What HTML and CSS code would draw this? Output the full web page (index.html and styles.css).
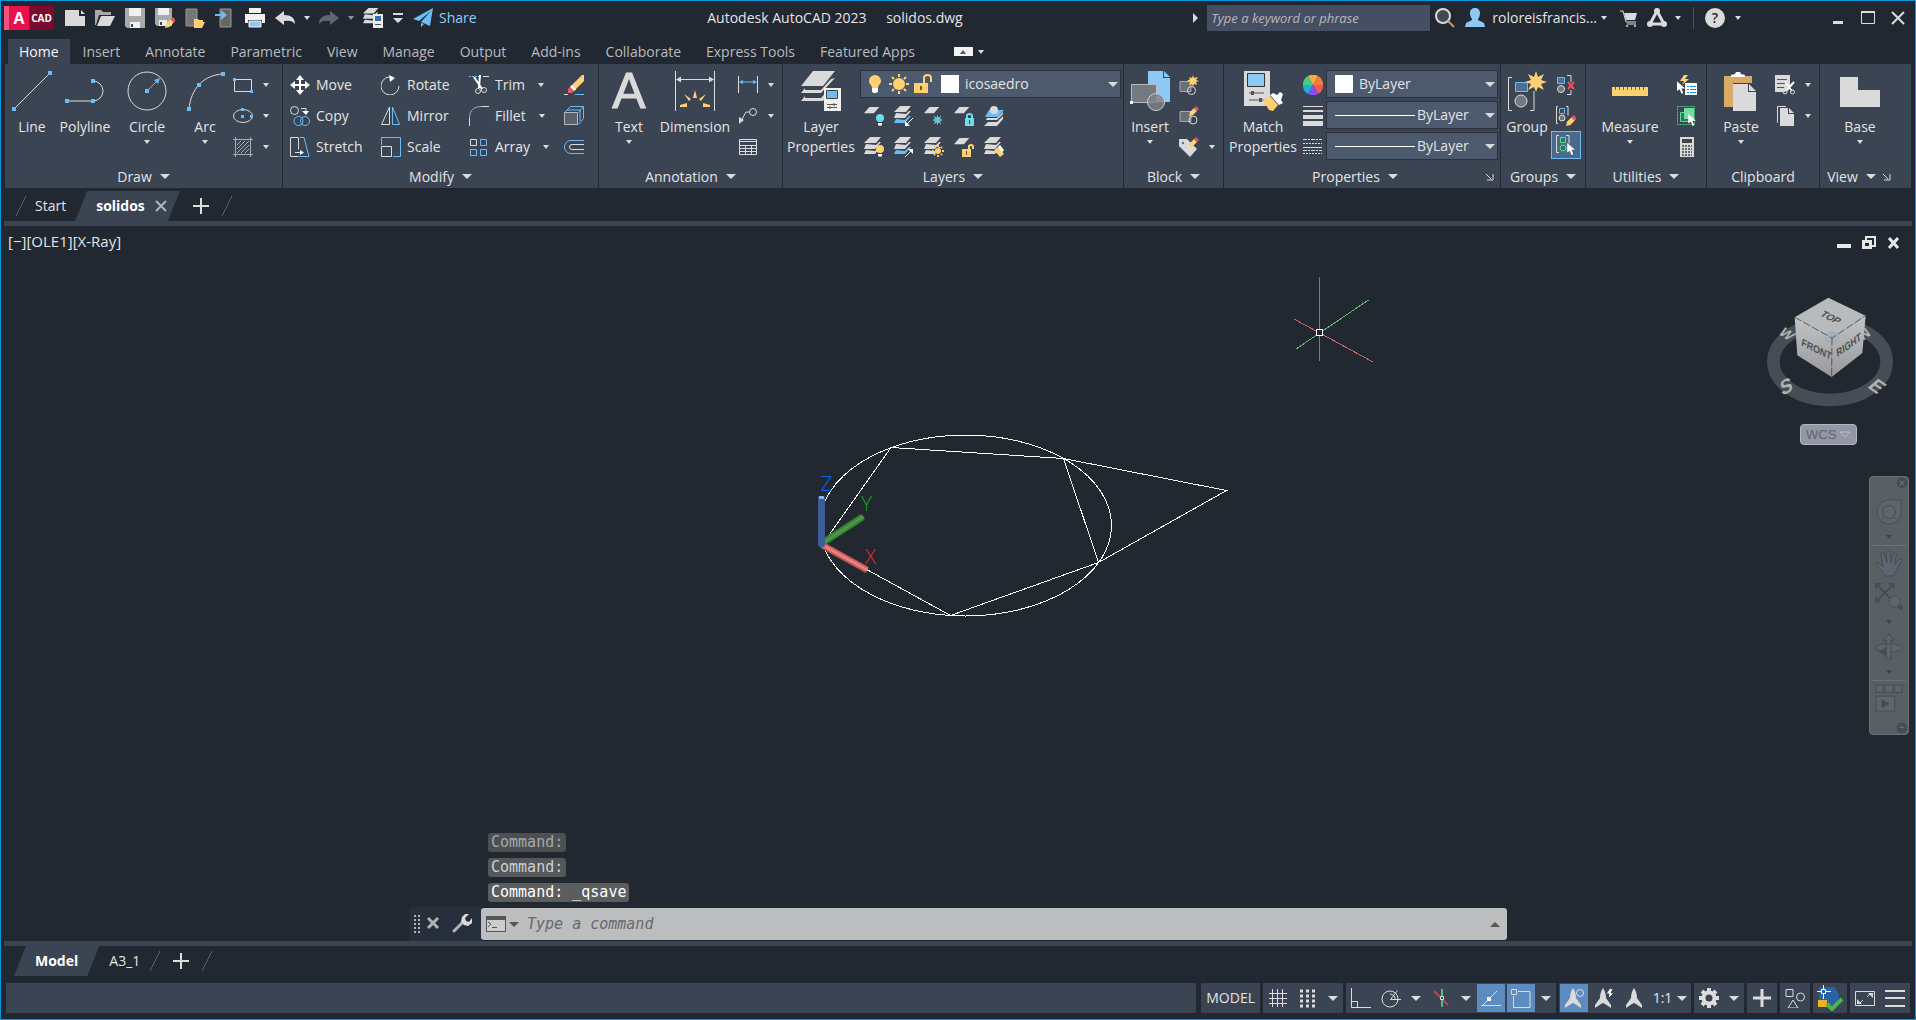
FILE: index.html
```html
<!DOCTYPE html>
<html lang="en">
<head>
	<meta charset="utf-8">
	<title>Autodesk AutoCAD 2023 - solidos.dwg</title>
	<link rel="stylesheet" href="styles.css">
</head>
<body>
<!-- shared icon parts -->
<svg class="defs" width="0" height="0">
	<symbol id="sheet" viewBox="0 0 20 20"><path class="fw" d="M6 1h11l-6 7H0z"/></symbol>
	<symbol id="stack" viewBox="0 0 20 20">
		<path class="fw" d="M6 0h11l-5 6H0z"/>
		<path class="fw" d="M2 7l-2 5h11l6-7h-2l-3 3z"/>
		<path class="fw" d="M2 13l-2 4h11l6-7h-2l-4 4z"/>
	</symbol>
	<symbol id="stack-blue" viewBox="0 0 20 20">
		<path class="fw" d="M6 0h11l-5 6H0z"/>
		<path class="fw" d="M2 7l-2 5h11l6-7h-2l-3 3z"/>
		<path class="fb" d="M2 13l-2 4h11l6-7h-2l-4 4z"/>
	</symbol>
	<symbol id="pencil" viewBox="0 0 10 10">
		<path class="fy" d="M1 6l4-4 3 3-4 4-4 1z"/><path fill="#e8545c" d="M5 2l2-2 3 3-2 2z"/>
	</symbol>
	<symbol id="cursor" viewBox="0 0 10 14"><path fill="#fff" d="M0 0v11l3-2 2 5 2-1-2-5h4z"/></symbol>
	<symbol id="north" viewBox="0 0 20 20"><path class="fw" d="M10 0c2 3 3 6 3 10l5 7v3l-6-4-2-1-2 1-6 4v-3l5-7c0-4 1-7 3-10z"/></symbol>
</svg>

<header class="titlebar">
	<button class="logo" aria-label="Application menu"><b>A</b><span>CAD</span></button>
	<div class="quick">
		<button aria-label="New"><svg viewBox="0 0 20 20"><path class="fw" d="M0 2h14v6h6v10H0zM16 2l4 4h-4z"/></svg></button>
		<button aria-label="Open"><svg viewBox="0 0 20 20"><path fill="#a9a9a9" d="M0 2h6l2 2h8v3H4L1 17H0z"/><path class="fw" d="M6 8h14l-5 10H2z"/></svg></button>
		<button aria-label="Save"><svg viewBox="0 0 20 20"><path fill="#a9a9a9" d="M0 0h20v20H2l-2-2z"/><path fill="#f0f0f0" d="M4 0h12v8H4zM5 14h10v6H5z"/><path fill="#444" d="M6 16h2v3H6z"/></svg></button>
		<button aria-label="Save As"><svg viewBox="0 0 20 20"><path fill="#a9a9a9" d="M0 0h17v18H2l-2-2z"/><path fill="#f0f0f0" d="M3 0h11v7H3zM4 12h8v6H4z"/><path fill="#444" d="M5 14h2v3H5z"/><use href="#pencil" x="10" y="9" width="11" height="11"/></svg></button>
		<button aria-label="Open from mobile"><svg viewBox="0 0 20 20"><path fill="#777" stroke="#999" d="M1 1h11v17H1z"/><path class="fy" d="M9 11h4l1 1h4v2h2l-3 6H9z"/></svg></button>
		<button aria-label="Save to mobile"><svg viewBox="0 0 20 20"><path fill="#666" stroke="#999" d="M5 1h11v18H5z"/><path class="fb" d="M0 6h6V2l6 5-6 5V8H0z"/></svg></button>
		<button aria-label="Plot"><svg viewBox="0 0 20 20"><path fill="#f0f0f0" d="M4 0h12v5H4zM0 6h20v9h-3v-3H3v3H0z"/><path fill="#8ec8f5" stroke="#f0f0f0" d="M4 13h12v6H4z"/></svg></button>
		<button aria-label="Undo"><svg viewBox="0 0 20 20"><path class="fw" d="M0 10l9-7v4c7 0 11 3 11 9-2-3-6-4-11-3v4z"/></svg></button>
		<button class="drop" aria-label="Undo list"></button>
		<button class="dim" aria-label="Redo"><svg viewBox="0 0 20 20"><path class="fw" d="M20 10l-9-7v4C4 7 0 10 0 16c2-3 6-4 11-3v4z"/></svg></button>
		<button class="drop dim2" aria-label="Redo list"></button>
		<button aria-label="Layer properties"><svg viewBox="0 0 20 20"><use href="#stack" width="18" height="18"/><path fill="#eee" d="M10 6h10v14H10z"/><path fill="#3b6ea5" d="M12 8h6v5h-6z"/><path stroke="#555" d="M12 16.500h6"/></svg></button>
		<button class="custom" aria-label="Customize"><svg viewBox="0 0 10 20"><path class="fw" d="M0 5h10v2H0zM0 10h10l-5 5z"/></svg></button>
		<button class="share"><svg viewBox="0 0 20 20"><path class="fb" d="M20 0L0 11l6 2L18 3 8 14l9 4zM8 15v4l3-3z"/></svg>Share</button>
	</div>
	<h1>Autodesk AutoCAD 2023 <span>solidos.dwg</span></h1>
	<div class="info">
		<i class="right-arrow"></i>
		<input class="search" type="text" placeholder="Type a keyword or phrase" aria-label="Search">
		<button class="find" aria-label="Find"><svg viewBox="0 0 20 20"><circle cx="8" cy="8" r="7" fill="#444a52" stroke-width="2"/><path stroke="#c89a62" stroke-width="2" d="M13 13l6 6"/></svg></button>
		<button class="user"><svg viewBox="0 0 20 20"><path fill="#8ec8f5" d="M10 0c3 0 5 2 5 5 0 2-1 5-2 6v1l6 3 1 4H0l1-4 6-3v-1C6 10 5 7 5 5c0-3 2-5 5-5z"/></svg>roloreisfrancis...</button>
		<button class="drop" aria-label="Account menu"></button>
		<button aria-label="Store"><svg viewBox="0 0 20 20"><path d="M1 3h3l3 11h10M8 16h9"/><path class="fw" d="M5 5h13l-2 7H7z"/><circle class="fw" cx="8" cy="18" r="1"/><circle class="fw" cx="16" cy="18" r="1"/></svg></button>
		<button aria-label="Apps"><svg viewBox="0 0 20 20"><path stroke-width="3" d="M10 3L3 16h14z"/><circle class="fw" cx="10" cy="3" r="3"/><circle class="fw" cx="3" cy="16" r="3"/><circle class="fw" cx="17" cy="16" r="3"/></svg></button>
		<button class="drop" aria-label="Apps menu"></button>
		<i class="divider"></i>
		<button class="help" aria-label="Help">?</button>
		<button class="drop" aria-label="Help menu"></button>
	</div>
	<div class="window">
		<button aria-label="Minimize"><svg viewBox="0 0 16 16"><path stroke-width="3" d="M3 12.500h10"/></svg></button>
		<button aria-label="Maximize"><svg viewBox="0 0 16 16"><path d="M1.500 1.500h13v12h-13z"/><path stroke-width="2" d="M1 2h14"/></svg></button>
		<button aria-label="Close"><svg viewBox="0 0 16 16"><path stroke-width="2" d="M2 2l12 12M14 2L2 14"/></svg></button>
	</div>
</header>

<nav class="ribbon-tabs">
	<button class="active">Home</button>
	<button>Insert</button>
	<button>Annotate</button>
	<button>Parametric</button>
	<button>View</button>
	<button>Manage</button>
	<button>Output</button>
	<button>Add-ins</button>
	<button>Collaborate</button>
	<button>Express Tools</button>
	<button>Featured Apps</button>
	<button class="minimize" aria-label="Minimize ribbon"><i></i></button>
	<button class="drop" aria-label="Ribbon options"></button>
</nav>

<main class="ribbon">
	<section class="panel draw">
		<div class="tools">
			<button class="big line"><svg viewBox="0 0 40 40"><path d="M2 38L38 2"/><path class="fb" d="M0 36h4v4H0zM36 0h4v4h-4z"/></svg>Line</button>
			<button class="big pline"><svg viewBox="0 0 40 40"><path d="M2 30h26a9 9 0 0 0 0-20"/><path class="fb" d="M0 28h4v4H0zM26 28h4v4h-4zM26 8h4v4h-4z"/></svg>Polyline</button>
			<button class="big circle"><svg viewBox="0 0 40 40"><circle cx="20" cy="20" r="19"/><path class="b" d="M20 20l9-9"/><path class="fb" d="M18 18h4v4h-4zM33 7l-2 6-4-4z"/></svg>Circle<i class="caret"></i></button>
			<button class="big arc"><svg viewBox="0 0 40 40"><path d="M4 38C6 18 18 4 38 3"/><path class="fb" d="M2 36h4v4H2zM36 1h4v4h-4zM12 12h4v4h-4z"/></svg>Arc<i class="caret"></i></button>
			<div class="minis">
				<button class="mini"><svg viewBox="0 0 20 20"><path d="M1.500 4.500h17v12h-17z"/><path class="fb" d="M0 3h3v3H0zM17 15h3v3h-3z"/></svg><i class="caret"></i></button>
				<button class="mini"><svg viewBox="0 0 20 20"><ellipse cx="10" cy="10" rx="9.500" ry="6.500"/><path class="fb" d="M8 2h3v3H8zM8 9h3v3H8zM17 9h3v3h-3z"/></svg><i class="caret"></i></button>
				<button class="mini"><svg viewBox="0 0 20 20"><path class="b" d="M4 8l4-4M4 12l8-8M4 16L16 4M8 16l8-8M12 16l4-4"/><path stroke="#a9acb2" d="M2.500 0v20M17.500 0v20M0 2.500h20M0 17.500h20"/></svg><i class="caret"></i></button>
			</div>
		</div>
		<h2><span>Draw <i class="caret"></i></span></h2>
	</section>

	<section class="panel modify">
		<div class="tools">
			<div class="grid">
				<button class="mini"><svg viewBox="0 0 20 20"><path stroke="#fff" stroke-width="2" d="M10 2v16M2 10h16"/><path fill="#fff" d="M10 0l4 5H6zM10 20l4-5H6zM0 10l5-4v8zM20 10l-5-4v8z"/></svg>Move</button>
				<button class="mini"><svg viewBox="0 0 20 20"><path d="M8 2a9 9 0 1 0 10 9"/><path fill="#fff" d="M8 0l6 3-5 4z"/></svg>Rotate</button>
				<button class="mini"><svg viewBox="0 0 20 20"><path class="b" stroke-dasharray="2 1" d="M0 1.500h10"/><path d="M14 1.500h6"/><path stroke="#fff" stroke-width="2" d="M5 2l8 12M11 0l-1 13"/><circle cx="9" cy="16" r="2.500"/><circle cx="15" cy="15" r="2.500"/></svg>Trim<i class="caret"></i></button>
				<button class="mini"><svg viewBox="0 0 20 20"><path class="fy" d="M20 0v6L10 16l-4-4L18 0z"/><path fill="#fff" d="M8 10l4 4-2 2-4-4z"/><path fill="#ee5560" d="M6 12l4 4-2 2H4v-4z"/><path d="M0 19.500h4"/><path class="b" d="M11 19.500h9"/></svg></button>
				<button class="mini"><svg viewBox="0 0 20 20"><circle cx="4.500" cy="4.500" r="4"/><path d="M11 2.500h5V7"/><path fill="#fff" d="M12 5h7l-3 4z"/><g class="b"><circle cx="8.500" cy="15" r="4.500"/><circle cx="15" cy="15" r="4.500"/></g></svg>Copy</button>
				<button class="mini"><svg viewBox="0 0 20 20"><path d="M8.500 1v17.500H.500z"/><path class="b" d="M11.500 1v17.500h7z"/></svg>Mirror</button>
				<button class="mini"><svg viewBox="0 0 20 20"><path class="b" d="M.500 12C.500 4 5 .500 13 .500"/><path d="M13 .500h7M.500 12v8"/></svg>Fillet<i class="caret"></i></button>
				<button class="mini"><svg viewBox="0 0 20 20"><g class="b"><path d="M.500 6.500l6-6h13l-5 6M19.500.500v12l-5 6M3 4h13v11"/></g><path d="M.500 6.500h13v12H.500z" stroke="#b4b7bb" fill="#5a616d"/></svg></button>
				<button class="mini"><svg viewBox="0 0 20 20"><path d="M8.500 19.500h-8V.500h8v12M5 15.500h7"/><path class="b" d="M10 .500h4l5 19H9"/><path fill="#fff" d="M10 13l4 2.500-4 2.500z"/></svg>Stretch</button>
				<button class="mini"><svg viewBox="0 0 20 20"><path class="b" d="M.500 8V.500h19v19H12"/><path d="M.500 9.500h10v10H.500z"/></svg>Scale</button>
				<button class="mini"><svg viewBox="0 0 20 20"><path d="M1.500 2.500h6v6h-6z"/><path class="b" d="M11.500 2.500h6v6h-6zM1.500 12.500h6v6h-6zM11.500 12.500h6v6h-6z"/></svg>Array<i class="caret"></i></button>
				<button class="mini"><svg viewBox="0 0 20 20"><path class="b" d="M20 3.500H7a6.500 6.500 0 0 0 0 13h13"/><path d="M20 7.500H8a2.500 2.500 0 0 0 0 5h12"/></svg></button>
			</div>
		</div>
		<h2><span>Modify <i class="caret"></i></span></h2>
	</section>

	<section class="panel annotation">
		<div class="tools">
			<button class="big text"><b class="glyph">A</b>Text<i class="caret"></i></button>
			<button class="big dimension"><svg viewBox="0 0 40 40"><path d="M.500 0v40M39.500 0v40M2 8.500h36"/><path class="fw" d="M1 8.500l5-3v6zM39 8.500l-5-3v6z"/><path class="fy" d="M18 27l2-8 2 8zM14 30l-5-7 7 5zM26 30l5-7-7 5zM12 32v4H5v-2zM28 32v4h7v-2z"/></svg>Dimension</button>
			<div class="minis">
				<button class="mini"><svg viewBox="0 0 20 20"><path d="M.500 1v17M19.500 1v17"/><path class="b" d="M2 7h16"/><path class="fb" d="M1 7l4-2v4zM19 7l-4-2v4z"/></svg><i class="caret"></i></button>
				<button class="mini"><svg viewBox="0 0 20 20"><circle cx="15" cy="6" r="3.500"/><path d="M11 6H8L3 15"/><path class="fw" d="M1 18V11l5 3z"/></svg><i class="caret"></i></button>
				<button class="mini"><svg viewBox="0 0 20 20"><path d="M1.500 2.500h17v15h-17zM1 4.500h18M1 8.500h18M1 11.500h18M1 14.500h18M7.500 8v10M13.500 8v10"/></svg></button>
			</div>
		</div>
		<h2><span>Annotation <i class="caret"></i></span></h2>
	</section>

	<section class="panel layers">
		<div class="tools">
			<button class="big"><svg viewBox="0 0 40 40"><path class="fw" d="M12 0h22L22 15H0zM4 17l-4 5h20l14-15-4 1-10 11H4zM4 25l-4 5h22l10-12h-4l-8 9H4z"/><path fill="#f0f0f0" d="M23 17h17v23H23z"/><path fill="#6cbcf5" stroke="#444" d="M25.500 19.500h11v8h-11z"/><path stroke="#555" d="M26 33.500h10M26 36.500h10M33 32v3M29 35v3"/></svg>Layer<br>Properties</button>
			<div class="stackcol">
				<label class="combo">
					<svg viewBox="0 0 20 20"><path class="fy" d="M10 1a6 6 0 0 1 6 6c0 3-3 4-3 7H7c0-3-3-4-3-7a6 6 0 0 1 6-6z"/><path fill="#fff" d="M7 14h6v4l-2 1H9l-2-1z"/></svg>
					<svg viewBox="0 0 20 20"><circle class="fy" cx="10" cy="10" r="6"/><path stroke="#ffd072" stroke-width="2" d="M10 0v3M10 17v3M0 10h3M17 10h3M3 3l2 2M15 15l2 2M17 3l-2 2M5 15l-2 2"/></svg>
					<svg viewBox="0 0 20 20"><path class="fy" d="M1 9h14v10H1z"/><path stroke="#ffd072" stroke-width="2" d="M11 9V4q0-3 3.500-3T18 4v4"/><path stroke="#6d5a30" stroke-width="2" d="M8 12v4"/></svg>
					<i class="swatch"></i>
					<select aria-label="Layer"><option>icosaedro</option></select>
				</label>
				<div class="iconrow">
					<button class="mini"><svg viewBox="0 0 20 20"><use href="#sheet" width="18" height="18"/><circle class="fc" cx="16" cy="12" r="4"/><path fill="#fff" d="M14 17h4v2l-2 1-2-1z"/></svg></button>
					<button class="mini"><svg viewBox="0 0 20 20"><use href="#stack-blue" width="20" height="20"/><path stroke="#fff" d="M19 12l-6 6"/><path fill="#fff" d="M11 20v-5l5 5z"/></svg></button>
					<button class="mini"><svg viewBox="0 0 20 20"><use href="#sheet" width="18" height="18"/><path stroke="#6fdce8" d="M9 14h9M13.500 9.500v9M10 10l7 8M17 10l-7 8M11 12h5v4h-5z"/></svg></button>
					<button class="mini"><svg viewBox="0 0 20 20"><use href="#sheet" width="18" height="18"/><path class="fc" d="M11 12h9v8h-9z"/><path stroke="#6fdce8" stroke-width="2" d="M13 12V9q2.500-2 5 0v3"/><path stroke="#256" d="M15.500 14v4"/></svg></button>
					<button class="mini"><svg viewBox="0 0 20 20"><path class="fw" d="M4 16h9l6-6v3l-6 7H0zM3 12h10l6-6v2l-6 6H2z"/><path class="fb" d="M5 4h15l-6 7H1z"/><circle class="fw" cx="10" cy="4" r="4"/></svg></button>
				</div>
				<div class="iconrow">
					<button class="mini"><svg viewBox="0 0 20 20"><use href="#stack" width="20" height="20"/><circle class="fy" cx="16" cy="12" r="4"/><path fill="#fff" d="M14 17h4v2l-2 1-2-1z"/></svg></button>
					<button class="mini"><svg viewBox="0 0 20 20"><use href="#stack-blue" width="20" height="20"/><path stroke="#fff" d="M11 20l6-6"/><path fill="#fff" d="M19 12v5l-5-5z"/></svg></button>
					<button class="mini"><svg viewBox="0 0 20 20"><use href="#stack" width="20" height="20"/><circle class="fy" cx="14" cy="14" r="3"/><path stroke="#ffd072" stroke-width="2" d="M14 8v2M14 18v2M8 14h2M18 14h2M10 10l1 1M17 17l1 1M18 10l-1 1M11 17l-1 1"/></svg></button>
					<button class="mini"><svg viewBox="0 0 20 20"><use href="#sheet" width="18" height="18"/><path class="fy" d="M8 12h9v8H8z"/><path stroke="#ffd072" stroke-width="2" d="M15 12V9q2-2 4 0v3"/><path stroke="#654" d="M12.500 14v4"/></svg></button>
					<button class="mini"><svg viewBox="0 0 20 20"><use href="#stack" width="20" height="20"/><path class="fy" d="M10 13l4-3 6 7-4 3z"/><path fill="#fff" d="M14 10l2-2 4 5-2 3z"/></svg></button>
				</div>
			</div>
		</div>
		<h2><span>Layers <i class="caret"></i></span></h2>
	</section>

	<section class="panel block">
		<div class="tools">
			<button class="big"><svg viewBox="0 0 40 40"><path fill="#8ec8f5" d="M18 0h15v7h7v24H18zM34 0l6 6h-6z"/><path fill="#74787f" stroke="#bbb" d="M1.500 13.500h25v18h-25z"/><circle fill="#80848b" fill-opacity=".8" stroke="#ccc" cx="26" cy="31" r="8.500"/><path fill="#fff" d="M0 30h3v3H0z"/></svg>Insert<i class="caret"></i></button>
			<div class="minis">
				<button class="mini"><svg viewBox="0 0 20 20"><path fill="#6a6e76" stroke="#aaa" d="M1 6.500h11v10H1z"/><circle cx="12.500" cy="15.500" r="4"/><path class="fy" d="M14 0l1 3 4-1-2 3 3 1-3 1 1 3-3-1-1 3-1-3-3 1 1-3-3-1 3-2-1-2 3 1z"/></svg></button>
				<button class="mini"><svg viewBox="0 0 20 20"><path fill="#6a6e76" stroke="#aaa" d="M1 5.500h11v10H1z"/><circle cx="14" cy="14" r="4"/><use href="#pencil" x="10" width="10" height="10"/></svg></button>
				<button class="mini"><svg viewBox="0 0 20 20"><path class="fw" d="M0 2h8l10 10-7 8L0 9z"/><circle cx="4" cy="6" r="1.500" fill="#3b4453"/><use href="#pencil" x="10" width="10" height="10"/></svg><i class="caret"></i></button>
			</div>
		</div>
		<h2><span>Block <i class="caret"></i></span></h2>
	</section>

	<section class="panel properties">
		<div class="tools">
			<button class="big"><svg viewBox="0 0 40 40"><path class="fw" d="M1 0h26v35H1z"/><path fill="#8ec8f5" stroke="#333" d="M4.500 2.500h17v13h-17z"/><path stroke="#555" d="M6 22h15M6 29h15"/><path fill="#555" d="M8 20h3v4H8zM16 27h3v4h-3z"/><path class="fy" d="M20 29l7-4 8 9-5 6-4-1z"/><path fill="#fff" d="M27 24l3-2 4 2 3-3 3 2-2 6 2 3-4 2z"/></svg>Match<br>Properties</button>
			<div class="minis">
				<button class="mini"><svg viewBox="0 0 20 20"><path fill="#fa4" d="M10 10L5 1a10 10 0 0 1 10 0z"/><path fill="#f87c3c" d="M10 10l5-9a10 10 0 0 1 5 9z"/><path fill="#ee5a5a" d="M10 10h10a10 10 0 0 1-5 9z"/><path fill="#8a4df0" d="M10 10l5 9a10 10 0 0 1-10 0z"/><path fill="#1ab0d8" d="M10 10l-5 9a10 10 0 0 1-5-9z"/><path fill="#45cf7c" d="M10 10H0a10 10 0 0 1 5-9z"/></svg></button>
				<button class="mini"><svg viewBox="0 0 20 20"><path class="fw" d="M0 0h20v1H0zM0 4h20v2H0zM0 9h20v4H0zM0 15h20v5H0z"/></svg></button>
				<button class="mini"><svg viewBox="0 0 20 20"><path stroke-dasharray="4 1 2 1" d="M0 2.500h19M0 13.500h19"/><path stroke-dasharray="2 1" d="M0 6.500h19M0 16.500h19"/><path d="M0 10.500h19"/></svg></button>
			</div>
			<div class="stackcol">
				<label class="combo"><i class="swatch"></i><select aria-label="Object color"><option>ByLayer</option></select></label>
				<label class="combo"><i class="rule"></i><select aria-label="Lineweight"><option>ByLayer</option></select></label>
				<label class="combo"><i class="rule"></i><select aria-label="Linetype"><option>ByLayer</option></select></label>
			</div>
		</div>
		<h2><span>Properties <i class="caret"></i></span><button class="launch" aria-label="Properties palette"><svg viewBox="0 0 8 8"><path d="M0 1l5 5M1 7h6V1"/></svg></button></h2>
	</section>

	<section class="panel groups">
		<div class="tools">
			<button class="big"><svg viewBox="0 0 40 40"><path d="M5 6.500H1.500v33H5M23 39.500h4V20"/><path fill="#4b6e94" stroke="#6cbcf5" d="M8.500 11.500h12v9h-12z"/><circle fill="#74787f" cx="14" cy="30" r="6"/><path class="fy" d="M29 0l2 6 6-3-3 6 6 2-6 2 3 6-6-3-2 5-2-5-6 3 3-6-6-2 6-2-3-6 6 3z"/></svg>Group</button>
			<div class="minis">
				<button class="mini"><svg viewBox="0 0 20 20"><path d="M11 .500h4V7M11 19.500h4V15"/><path fill="#4b6e94" class="b" d="M1.500 2.500h7v6h-7z"/><circle fill="#74787f" cx="5" cy="14" r="3.500"/><path stroke="#f0505a" stroke-width="2" d="M12 7l6 7M18 7l-6 7"/></svg></button>
				<button class="mini"><svg viewBox="0 0 20 20"><path d="M2 .500H.500v17H2M10 .500h2v9"/><path class="b" d="M3.500 2.500h5v5h-5z"/><circle fill="#74787f" cx="6" cy="12" r="3"/><use href="#pencil" x="10" y="9" width="11" height="11"/></svg></button>
				<button class="mini on"><svg viewBox="0 0 20 20"><path d="M3 .500H.500v17H3M10 .500h3v8"/><path fill="#2c7a55" stroke="#65d89a" d="M4.500 2.500h5v5h-5z"/><circle fill="#2c7a55" stroke="#65d89a" cx="7" cy="13" r="3"/><use href="#cursor" x="11" y="8" width="9" height="12"/></svg></button>
			</div>
		</div>
		<h2><span>Groups <i class="caret"></i></span></h2>
	</section>

	<section class="panel utilities">
		<div class="tools">
			<button class="big"><svg viewBox="0 0 40 40"><path class="fy" d="M2 16h36v9H2z"/><path stroke="#7a6336" stroke-dasharray="1 3" stroke-width="3" d="M5 17.500h32"/></svg>Measure<i class="caret"></i></button>
			<div class="minis">
				<button class="mini"><svg viewBox="0 0 20 20"><path class="fy" d="M7 0L3 6h4l-2 4 7-6H8l3-4z"/><path fill="#fff" d="M8 8h12v12H8z"/><path stroke="#28d" stroke-dasharray="2 1 6" d="M10 11.500h9M10 14.500h9M10 17.500h9"/><use href="#cursor" y="6" width="9" height="13"/></svg></button>
				<button class="mini"><svg viewBox="0 0 20 20"><path stroke="#49c882" stroke-dasharray="2 1" d="M.500.500h17v18H.500z"/><path fill="#2c7a55" stroke="#65d89a" d="M3.500 6.500h9v9h-9z"/><path fill="#74dba4" d="M7 2h10v11H7z"/><use href="#cursor" x="11" y="8" width="9" height="12"/></svg></button>
				<button class="mini"><svg viewBox="0 0 20 20"><path class="fw" d="M3 0h14v20H3z"/><path fill="#444" d="M5 2h10v4H5z"/><path stroke="#666" stroke-dasharray="2 1" stroke-width="2" d="M5 9h10M5 12h10M5 15h10M5 18h10"/></svg></button>
			</div>
		</div>
		<h2><span>Utilities <i class="caret"></i></span></h2>
	</section>

	<section class="panel clipboard">
		<div class="tools">
			<button class="big"><svg viewBox="0 0 40 40"><path fill="#d9a968" d="M3 5h28v7H12v24H3z"/><path fill="#fff" d="M10 6V4l4-1 1-2h4l1 2 4 1v2z"/><path class="fw" d="M12 13h15v8h8v19H12zM28 13l7 7h-7z"/></svg>Paste<i class="caret"></i></button>
			<div class="minis">
				<button class="mini"><svg viewBox="0 0 20 20"><path class="fw" d="M0 0h15v10l-5 7H0z"/><path stroke="#555" d="M2 4.500h10M2 8.500h8M2 12.500h7"/><path stroke="#fff" stroke-width="2" d="M10 7l7 9M19 7l-8 9"/><circle cx="10" cy="17" r="2"/><circle cx="17.500" cy="17" r="2"/></svg><i class="caret"></i></button>
				<button class="mini"><svg viewBox="0 0 20 20"><path d="M3 16.500h-.500V.500H11"/><path class="fw" d="M5 2h8v6h6v12H5zM14 2l5 5h-5z"/></svg><i class="caret"></i></button>
			</div>
		</div>
		<h2><span>Clipboard</span></h2>
	</section>

	<section class="panel view">
		<div class="tools">
			<button class="big"><svg viewBox="0 0 40 40"><path class="fw" d="M0 6h18v13h22v17H0z"/></svg>Base<i class="caret"></i></button>
		</div>
		<h2><span>View <i class="caret"></i></span><button class="launch" aria-label="View settings"><svg viewBox="0 0 8 8"><path d="M0 1l5 5M1 7h6V1"/></svg></button></h2>
	</section>
</main>

<nav class="file-tabs">
	<i class="slash"></i>
	<button>Start</button>
	<div class="tab"><button class="name">solidos</button><button class="x" aria-label="Close solidos"><svg viewBox="0 0 12 12"><path d="M1 1l10 10M11 1L1 11"/></svg></button></div>
	<button class="plus" aria-label="New drawing"></button>
	<i class="slash"></i>
</nav>

<div class="viewport">
	<svg class="model" viewBox="1 226 1914 715" preserveAspectRatio="xMidYMid slice">
		<defs>
			<linearGradient id="red" x1="0" y1="0" x2="0" y2="1"><stop offset="0" stop-color="#b84848"/><stop offset=".5" stop-color="#f58a8a"/><stop offset="1" stop-color="#9c4040"/></linearGradient>
			<linearGradient id="green" x1="0" y1="0" x2="0" y2="1"><stop offset="0" stop-color="#2e702e"/><stop offset=".5" stop-color="#4ea04a"/><stop offset="1" stop-color="#2f752f"/></linearGradient>
		</defs>
		<g class="wire">
			<ellipse cx="965.500" cy="525.500" rx="146" ry="90.500"/>
			<path d="M822 545L891 447.500L1063.500 458.500L1098.500 562.500L950.500 615.500z"/>
			<path d="M1063.500 458.500L1226.500 490.500L1098.500 562.500"/>
		</g>
		<!-- ucs icon -->
		<g class="ucs">
			<rect y="-3.500" width="47" height="7" rx="2" fill="url(#green)" transform="translate(824 542) rotate(-33)"/>
			<rect y="-3.500" width="52" height="7" rx="2" fill="url(#red)" transform="translate(822 545) rotate(29)"/>
			<rect x="818" y="496" width="7" height="51" rx="2" fill="#3b5c96"/>
			<rect x="819" y="496" width="5" height="3" rx="1" fill="#7fbcf0"/>
			<text x="826.500" y="491" fill="#0a62f0">Z</text>
			<text x="866.500" y="511" fill="#14a314">Y</text>
			<text x="870.500" y="564" fill="#e02828">X</text>
		</g>
		<!-- crosshair -->
		<g class="cross">
			<path stroke="#6a70d8" d="M1319.500 277v84"/>
			<path stroke="#5fb870" d="M1296 349l72.500-49"/>
			<path stroke="#c8646a" d="M1294 319l79 43"/>
			<path stroke="#fff" fill="#212830" d="M1316.500 329.500h6v6h-6z"/>
		</g>
	</svg>

	<div class="vp-label"><button>[−]</button><button>[OLE1]</button><button>[X-Ray]</button></div>
	<div class="vp-window">
		<button aria-label="Minimize viewport"><svg viewBox="0 0 14 14"><path stroke-width="4" d="M0 10h14"/></svg></button>
		<button aria-label="Restore viewport"><svg viewBox="0 0 14 14"><path stroke-width="2" d="M4 4V1h9v9h-3"/><path stroke-width="3" d="M1.500 5.500h7v6h-7z"/></svg></button>
		<button aria-label="Close viewport"><svg viewBox="0 0 14 14"><path stroke-width="3" d="M2 2l9 10M11 2L2 12"/></svg></button>
	</div>

	<svg class="cube" viewBox="0 0 525 420">
		<defs>
			<linearGradient id="face" x1="0" y1="0" x2="0" y2="1"><stop offset="0" stop-color="#c2c3c4"/><stop offset="1" stop-color="#98999b"/></linearGradient>
		</defs>
		<ellipse cx="270" cy="275" rx="170" ry="115" fill="none" stroke="#474d55" stroke-width="38"/>
		<g class="compass">
			<text transform="translate(132 180) rotate(32) skewX(-18)" x="-4" y="20">W</text>
			<text transform="translate(370 212) rotate(-36)">N</text>
			<text transform="translate(126 378) rotate(-28) skewX(-16)" class="s">S</text>
			<text transform="translate(404 338) rotate(35) skewX(-14)" class="s" x="-6" y="24">E</text>
		</g>
		<path fill="#b9babb" d="M265 83l112 54-101 67-112-62z"/>
		<path fill="url(#face)" d="M164 142l112 62-1 117-103-65z"/>
		<path fill="url(#face)" d="M377 137l-10 112-92 72 1-117z"/>
		<path fill="#a5b0b8" d="M276 180l20 12-1 22-19 12-21-12v-22z"/>
		<path fill="none" stroke="#5c5f62" stroke-width="3" stroke-dasharray="22 8" d="M164 142l112 62 101-67M276 204l-1 117"/>
		<g class="faces">
			<text transform="translate(238 136) rotate(27) skewX(-22)">TOP</text>
			<text transform="translate(183 226) rotate(26) skewX(16)">FRONT</text>
			<text transform="translate(292 262) rotate(-36) skewX(-26)">RIGHT</text>
		</g>
	</svg>
	<button class="wcs">WCS<svg viewBox="0 0 12 8"><path d="M1 1h10L6 6z"/></svg></button>

	<div class="navbar">
		<button class="tiny" aria-label="Close navigation bar"><svg viewBox="0 0 10 10"><circle cx="5" cy="5" r="4" fill="#484d55"/><path stroke="#6a6f74" d="M3 3l4 4M7 3L3 7"/></svg></button>
		<button aria-label="Full navigation wheel"><svg viewBox="0 0 30 30"><path d="M15 2h13v13a13 13 0 1 1-13-13z"/><circle cx="15" cy="15" r="7"/><path d="M10 20l-5 5M20 20l5 5"/></svg></button>
		<i class="caret"></i>
		<hr>
		<button aria-label="Pan"><svg viewBox="0 0 30 30"><path d="M10 29L8 24 1 17q0-3 3-2l5 4L6 6q0-3 3-2l4 11-1-12q2-3 4 0l1 12 3-11q3-1 3 1l-2 12 5-6q3-1 3 1l-6 11-3 6z"/></svg></button>
		<button aria-label="Zoom extents"><svg viewBox="0 0 30 30"><path stroke-width="2" d="M2 2l17 17M19 2L2 19"/><path class="nf" d="M0 0h7L0 7zM21 0h-7l7 7zM0 21h7l-7-7z"/><circle cx="21" cy="20" r="6"/><path stroke-width="4" d="M25 24l4 4"/></svg></button>
		<i class="caret"></i>
		<button aria-label="Orbit"><svg viewBox="0 0 30 30"><path d="M12 8H9l6-7 5 7h-3v20h-5zM11 20Q1 19 1 16c0-6 28-6 28 0 0 3-6 4-12 4"/><path class="nf" d="M4 20l8-5v10z"/></svg></button>
		<i class="caret"></i>
		<hr>
		<button aria-label="Show motion"><svg viewBox="0 0 30 30"><path d="M1 1h8v8H1zM11 1h8v8h-8zM21 1h8v8h-8zM1 13h20v16H1z"/><path class="nf" d="M7 16l9 5-9 5z"/></svg></button>
		<button class="tiny end" aria-label="Customize navigation bar"><svg viewBox="0 0 10 10"><circle cx="5" cy="5" r="4" fill="#484d55"/><path stroke="#6a6f74" d="M3 4.500h4"/></svg></button>
	</div>

	<div class="command">
		<div class="history">
			<p class="old">Command:</p>
			<p class="mid">Command:</p>
			<p>Command: _qsave</p>
		</div>
		<div class="cmdbar">
			<div class="grip">
				<i class="dots"></i>
				<button aria-label="Close command line"><svg viewBox="0 0 20 20"><path stroke-width="3" d="M5 4l10 10M15 4L5 14"/></svg></button>
				<button aria-label="Customize command line"><svg viewBox="0 0 20 20"><path stroke-width="3" stroke-linecap="round" d="M2 17L12 7"/><path class="fw" d="M17 0l-4 4 1 3 3 1 3-4v5l-4 3-4-1-3-3 1-5 3-3z"/></svg></button>
			</div>
			<div class="entry">
				<svg viewBox="0 0 20 16"><path fill="#ccc" stroke="#555" d="M.500.500h19v15H.500z"/><path fill="#555" d="M0 0h20v4H0z"/><path stroke="#555" d="M2 6l3 2-3 3M6 11.500h5"/></svg>
				<i class="caret"></i>
				<input type="text" placeholder="Type a command" aria-label="Command">
				<button aria-label="Command history"></button>
			</div>
		</div>
	</div>
</div>

<nav class="layout-tabs">
	<div class="tab"><button class="name">Model</button></div>
	<button>A3_1</button>
	<i class="slash"></i>
	<button class="plus" aria-label="New layout"></button>
	<i class="slash"></i>
</nav>

<footer class="status">
	<div class="fill"></div>
	<button class="model-btn">MODEL</button>
	<div class="set">
		<button aria-label="Grid"><svg viewBox="0 0 20 20"><path d="M4.500 1v18M9.500 1v18M14.500 1v18M1 5.500h18M1 10.500h18M1 15.500h18"/></svg></button>
		<button aria-label="Snap"><svg viewBox="0 0 20 20"><path stroke-width="3" stroke-dasharray="3 3" d="M2 3h15M2 8h15M2 13h15M2 18h15"/></svg></button>
		<button class="drop" aria-label="Snap settings"></button>
	</div>
	<div class="set">
		<button aria-label="Ortho"><svg viewBox="0 0 20 20"><path d="M.500 0v19.500H20M.500 13.500h6v6"/></svg></button>
		<button aria-label="Polar"><svg viewBox="0 0 20 20"><circle cx="9" cy="11" r="8"/><path d="M9.500 11.500H20M9.500 11.500l7-9M9 6a5 5 0 0 1 5 5"/></svg></button>
		<button class="drop" aria-label="Polar settings"></button>
		<button aria-label="Isometric"><svg viewBox="0 0 20 20"><path stroke="#a8505a" stroke-width="2" d="M3 3l14 14"/><path stroke="#4fc07a" stroke-width="2" d="M11 1v18"/><path fill="#3b4453" stroke="#dcdcdc" d="M9.500 8.500h3v3h-3z"/></svg></button>
		<button class="drop" aria-label="Isometric settings"></button>
		<button class="on" aria-label="Object snap tracking"><svg viewBox="0 0 20 20"><path d="M0 17.500h20M2 17L16 3"/><path fill="#fff" d="M6 9h4v4H6z"/></svg></button>
		<button class="on" aria-label="Object snap"><svg viewBox="0 0 20 20"><path d="M7 3.500h12v16H2.500V8M.500 1.500h5v5h-5z"/></svg></button>
		<button class="drop" aria-label="Object snap settings"></button>
	</div>
	<div class="set">
		<button class="on" aria-label="Annotation visibility"><svg viewBox="0 0 20 20"><use href="#north" x="-1" width="20" height="20"/><circle cx="16" cy="5" r="3.500"/></svg></button>
		<button aria-label="Auto scale"><svg viewBox="0 0 20 20"><use href="#north" x="-1" width="20" height="20"/><path fill="#fff" stroke="#3b4453" d="M16 0l-4 6h3l-1 5 6-6h-3l2-4z"/></svg></button>
		<button aria-label="Annotation scale"><svg viewBox="0 0 20 20"><use href="#north" width="20" height="20"/></svg></button>
		<button class="scale">1:1<i class="caret"></i></button>
	</div>
	<div class="set">
		<button aria-label="Workspace"><svg viewBox="0 0 20 20"><circle cx="10" cy="10" r="5.500" stroke-width="4"/><path stroke-width="4" d="M10 0v4M10 16v4M0 10h4M16 10h4M3 3l3 3M14 14l3 3M17 3l-3 3M6 14l-3 3"/></svg></button>
		<button class="drop" aria-label="Workspace menu"></button>
	</div>
	<div class="set"><button aria-label="Annotation monitor"><svg viewBox="0 0 20 20"><path stroke-width="3" d="M10 1v18M1 10h18"/></svg></button></div>
	<div class="set"><button aria-label="Isolate objects"><svg viewBox="0 0 20 20"><path d="M1 1.500h7v7H1zM8 12l5 8H3z"/><circle cx="15.500" cy="9" r="4"/></svg></button></div>
	<div class="set wide"><button aria-label="Notifications"><svg viewBox="0 0 26 26"><path fill="#2b62a6" d="M2 2h16l4 8v10H2z"/><path fill="#ecb325" d="M1 15h9v7H1z"/><path stroke="#fff" d="M6.500 0v14M0 6.500h14"/><path fill="#2b62a6" stroke="#fff" d="M4.500 4.500h4v4h-4z"/><path stroke="#49b649" stroke-width="4" d="M10 19l5 5 10-10"/></svg></button></div>
	<div class="set">
		<button aria-label="Clean screen"><svg viewBox="0 0 20 20"><path d="M.500 3.500h19v14H.500zM12 9l4-4M8 12l-4 4"/><path class="fw" d="M13 5h5v5zM2 11v5h5z"/></svg></button>
		<button aria-label="Customization"><svg viewBox="0 0 20 20"><path stroke-width="2" d="M0 3h20M0 10h20M0 18h20"/></svg></button>
	</div>
</footer>
</body>
</html>
```
FILE: styles.css
```css
* {
	margin: 0;
	padding: 0;
	box-sizing: border-box;
}
body {
	display: flex;
	flex-direction: column;
	height: 100vh;
	overflow: hidden;
	border: 1px solid #0a96dc;
	background: #222831;
	color: #e4e4e4;
	font: 14px/20px "Open Sans", "Noto Sans", sans-serif;
}
button, input, select {
	border: 0;
	background: none;
	color: inherit;
	font: inherit;
}
button {
	display: flex;
	flex: none;
	align-items: center;
	white-space: nowrap;
}
svg {
	display: block;
	flex: none;
	width: 20px;
	height: 20px;
	fill: none;
	stroke: #dcdcdc;
}
.defs {
	position: absolute;
	width: 0;
	height: 0;
}
.fw { fill: #dadada; stroke: none; }
.fb { fill: #6cbcf5; stroke: none; }
.fy { fill: #ffd072; stroke: none; }
.fc { fill: #6fdce8; stroke: none; }
.b { stroke: #6cbcf5; }
path[fill]:not([stroke]):not(.b) { stroke: none; }

/* arrows */
.caret, .drop::after {
	display: block;
	flex: none;
	border: solid transparent;
	border-width: 4px 3px 0;
	border-top-color: #dcdcdc;
}
.drop {
	justify-content: center;
	width: 24px;
	height: 20px;
}
.drop::after { content: ""; }

/* title bar */
.titlebar {
	display: flex;
	flex: none;
	align-items: center;
	height: 34px;
	padding: 0 9px 0 3px;
}
.logo {
	height: 24px;
	margin-right: 11px;
	border-left: 5px solid #f0527a;
	background: #7c0a2e;
	color: #fff;
}
.logo b {
	width: 20px;
	background: #e8114d;
	font-size: 16px;
	line-height: 24px;
}
.logo span {
	width: 25px;
	font-size: 10px;
	font-weight: bold;
}
.quick, .info, .window {
	display: flex;
	flex: none;
	align-items: center;
}
.quick { gap: 10px; }
.quick .drop {
	width: 6px;
	margin: 0 -1px;
}
.quick .dim { opacity: .35; }
.quick .dim2 { opacity: .6; }
.custom svg { width: 10px; }
.share {
	gap: 6px;
	color: #8ecdf8;
}
.titlebar h1 {
	flex: 1;
	font-size: 14px;
	font-weight: normal;
	text-align: center;
	white-space: nowrap;
}
.titlebar h1 span { margin-left: 16px; }
.right-arrow {
	margin-right: 9px;
	border: solid transparent;
	border-width: 5px 0 5px 5px;
	border-left-color: #dcdcdc;
}
.search {
	width: 223px;
	height: 26px;
	padding: 0 4px;
	background: #454f61;
	font-size: 13px;
	font-style: italic;
}
.search::placeholder { color: #b4b8be; }
.find { margin: 0 10px 0 5px; }
.user { gap: 7px; }
.info .drop { width: 14px; }
.info .drop + button { margin-left: 8px; }
.info .drop + button + button { margin: 0 4px 0 8px; }
.divider {
	width: 1px;
	height: 22px;
	margin: 0 11px 0 8px;
	background: #4a5260;
}
.help {
	justify-content: center;
	width: 20px;
	height: 20px;
	margin-right: 6px;
	border-radius: 50%;
	background: #dadada;
	color: #222831;
	font-weight: 600;
}
.window {
	gap: 14px;
	margin-left: 85px;
}
.window svg {
	width: 16px;
	height: 16px;
}

/* ribbon tabs */
.ribbon-tabs {
	display: flex;
	flex: none;
	align-items: center;
	gap: 1px;
	height: 29px;
	padding: 4px 7px 0;
	color: #b9bbbe;
}
.ribbon-tabs > button:not(.drop) {
	height: 25px;
	padding: 0 12px;
}
.ribbon-tabs > .active:not(.drop) {
	padding: 0 11px;
	background: #3b4453;
	color: #f4f4f4;
}
.ribbon-tabs > .minimize:not(.drop) { padding: 0 0 0 26px; }
.minimize i {
	display: flex;
	justify-content: center;
	align-items: center;
	width: 19px;
	height: 9px;
	background: #f2f2f2;
}
.minimize i::after {
	content: "";
	border: solid transparent;
	border-width: 0 3px 4px;
	border-bottom-color: #555;
}
.ribbon-tabs .drop { width: 15px; }

/* ribbon */
.ribbon {
	display: flex;
	flex: none;
	height: 124px;
	margin: 0 4px;
	background: #3b4453;
}
.panel {
	display: flex;
	flex: none;
	flex-direction: column;
	border-right: 1px solid #222933;
}
.panel:last-child {
	flex: 1;
	border: 0;
}
.tools {
	display: flex;
	height: 101px;
	padding: 5px 4px 0;
}
.panel h2 {
	display: flex;
	align-items: center;
	height: 23px;
	font-size: 14px;
	font-weight: normal;
}
.panel h2 span {
	display: flex;
	flex: 1;
	justify-content: center;
	align-items: center;
	gap: 8px;
}
.panel h2 .caret, .combo::after {
	border-width: 5px 5px 0;
}
.launch { margin-right: 6px; }
.launch svg {
	width: 8px;
	height: 8px;
}
.big {
	flex-direction: column;
	width: 68px;
	padding-top: 2px;
	line-height: 20px;
	text-align: center;
}
.big svg {
	width: 40px;
	height: 40px;
	margin-bottom: 6px;
}
.big .caret { margin-top: 3px; }
.glyph {
	height: 40px;
	margin-bottom: 6px;
	color: #dadada;
	font: 50px/40px "Liberation Sans", Arial, sans-serif;
	-webkit-text-stroke: 1px #dadada;
}
.minis, .stackcol {
	display: flex;
	flex-direction: column;
}
.mini {
	gap: 6px;
	height: 31px;
}
.minis .mini { gap: 10px; }
.mini .caret { margin-left: 3px; }
.minis .caret { margin: 0; }
.iconrow {
	display: flex;
	gap: 10px;
	padding-left: 4px;
}
.line { width: 42px; }
.pline { width: 64px; }
.circle { width: 60px; }
.arc { width: 56px; }
.draw { width: 278px; }
.draw .tools { padding-left: 6px; }
.modify { width: 316px; }
.modify .tools { padding-left: 7px; }
.grid {
	display: grid;
	grid-template-columns: 91px 88px 95px 20px;
	align-content: start;
}
.grid .caret { margin-left: 7px; }
.annotation { width: 184px; }
.text { width: 52px; }
.dimension {
	width: 80px;
	margin-right: 3px;
}
.layers { width: 341px; }
.layers .stackcol {
	flex: 1;
	margin-left: 5px;
}
.layers .tools { padding-right: 2px; }
.block { width: 100px; }
.block .big {
	width: 44px;
	margin-right: 7px;
}
.properties { width: 277px; }
.properties .stackcol { flex: 1; }
.properties .tools { padding-right: 2px; }
.properties .big { margin: 0 6px 0 1px; }
.properties .minis { margin-right: 3px; }
.groups { width: 85px; }
.groups .big {
	width: 44px;
	margin-right: 3px;
}
.mini.on {
	justify-content: center;
	height: 26px;
	margin: 1px 0 0;
	background: #4a6a8c;
	outline: 1px solid #6cbcf5;
}
.groups .mini {
	justify-content: center;
	width: 28px;
}
.utilities { width: 121px; }
.utilities .big {
	width: 80px;
	margin-right: 7px;
}
.clipboard { width: 113px; }
.clipboard .big {
	width: 60px;
	margin-right: 4px;
}
.view .big { width: 72px; }
.view h2 { padding: 0 14px 0 0; }

.combo {
	display: flex;
	align-items: center;
	height: 28px;
	margin: 1px 0 2px;
	padding: 0 2px 0 4px;
	border: 1px solid #2a313d;
	background: #4d596d;
}
.combo::after {
	content: "";
	border-style: solid;
	border-color: #dcdcdc transparent;
}
.combo svg { margin-right: 4px; }
.combo select {
	flex: 1;
	min-width: 0;
	appearance: none;
}
.swatch {
	width: 18px;
	height: 18px;
	margin: 0 6px 0 4px;
	background: #fff;
}
.rule {
	width: 80px;
	height: 1px;
	margin: 0 2px 0 4px;
	background: #fff;
}

/* drawing and layout tabs */
.file-tabs, .layout-tabs {
	display: flex;
	flex: none;
	align-items: center;
	margin: 0 3px;
	border: solid #3b4453;
}
.file-tabs {
	height: 38px;
	padding: 3px 12px 0;
	border-width: 0 0 5px;
}
.layout-tabs {
	height: 35px;
	padding: 0 10px;
	border-width: 5px 0 0;
}
.slash {
	width: 10px;
	height: 20px;
	background: linear-gradient(to top left, transparent 47%, #555e6c 48%, #555e6c 52%, transparent 53%);
}
.file-tabs > button { margin: 0 9px; }
.tab {
	display: flex;
	align-items: center;
	height: 30px;
	background: #3b4453;
	clip-path: polygon(12px 0, 100% 0, calc(100% - 12px) 100%, 0 100%);
}
.tab .name {
	padding: 0 21px;
	color: #fff;
	font-weight: bold;
}
.file-tabs .tab .name { padding-right: 10px; }
.file-tabs .tab { padding-right: 13px; }
.tab .x svg {
	width: 12px;
	height: 12px;
	stroke: #b0b3b8;
	stroke-width: 2;
}
.layout-tabs > button { margin: 0 10px; }
.plus {
	width: 16px;
	height: 16px;
	background: linear-gradient(#dcdcdc, #dcdcdc) center / 16px 2px no-repeat, linear-gradient(#dcdcdc, #dcdcdc) center / 2px 16px no-repeat;
}
.file-tabs > .plus, .layout-tabs > .plus { margin: 0 13px; }

/* viewport */
.viewport {
	position: relative;
	flex: 1;
	min-height: 0;
	background: #212830;
}
.model {
	position: absolute;
	width: 100%;
	height: 100%;
}
.wire {
	stroke: #fff;
	shape-rendering: crispEdges;
}
.cross { shape-rendering: crispEdges; }
.ucs {
	stroke: none;
	font: 300 21px "Open Sans", sans-serif;
	text-anchor: middle;
}
.vp-label {
	position: absolute;
	top: 5px;
	left: 7px;
	display: flex;
	font-size: 15px;
}
.vp-window {
	position: absolute;
	top: 10px;
	right: 14px;
	display: flex;
	gap: 11px;
}
.vp-window svg {
	width: 14px;
	height: 14px;
	stroke: #e8e8e8;
}
.cube {
	position: absolute;
	top: 44px;
	right: 0;
	width: 175px;
	height: 140px;
	stroke: none;
}
.compass {
	fill: #b0b2b4;
	font: bold 42px "Liberation Sans", Arial, sans-serif;
}
.compass .s { font-size: 58px; }
.faces {
	fill: #4c5056;
	font: bold 29px "Liberation Sans", Arial, sans-serif;
}
.wcs {
	position: absolute;
	top: 198px;
	right: 58px;
	justify-content: space-between;
	width: 57px;
	height: 21px;
	padding: 0 5px;
	border: 1px solid #b2b4c2;
	border-radius: 4px;
	background: #9496a5;
	color: #62656e;
	font: 13px/19px "Liberation Sans", Arial, sans-serif;
}
.wcs svg {
	width: 12px;
	height: 8px;
	stroke: #b9bbc6;
}
.navbar {
	position: absolute;
	top: 250px;
	right: 6px;
	display: flex;
	flex-direction: column;
	align-items: center;
	width: 40px;
	height: 259px;
	border: 1px solid #6a6f73;
	border-radius: 4px;
	background: #5a5f63;
}
.navbar svg {
	width: 28px;
	height: 28px;
	fill: #5f656e;
	stroke: #464b55;
}
.navbar .nf {
	fill: #464b55;
	stroke: none;
}
.navbar .tiny { align-self: flex-end; }
.navbar .tiny svg {
	width: 12px;
	height: 12px;
}
.navbar button { margin: 3px 0; }
.navbar .tiny { margin: 0 0 6px; }
.navbar .end { margin: auto 0 0; }
.navbar .caret {
	margin: 6px 0;
	border-top-color: #3e434a;
}
.navbar hr {
	width: 34px;
	height: 1px;
	border: 0;
	background: #6d7276;
}

/* command line */
.command {
	position: absolute;
	right: 0;
	bottom: 0;
	left: 0;
	max-width: 1098px;
	margin: 0 auto;
	font-family: "DejaVu Sans Mono", monospace;
	font-size: 15px;
}
.history {
	display: flex;
	flex-direction: column;
	align-items: flex-start;
	gap: 6px;
	padding: 0 0 5px 79px;
}
.history p {
	padding: 0 3px;
	border-radius: 3px;
	background: #5b5d5f;
	color: #fff;
	line-height: 19px;
}
.history .mid {
	background: #54585a;
	color: #cfd0d1;
}
.history .old {
	background: #4d5052;
	color: #a6a8a9;
}
.cmdbar {
	display: flex;
	height: 34px;
}
.grip {
	display: flex;
	align-items: center;
	gap: 9px;
	width: 72px;
	padding-left: 5px;
	border-radius: 4px 0 0 4px;
	background: #282f3c;
}
.grip svg { stroke: #b0b2b4; }
.dots {
	width: 6px;
	height: 22px;
	margin-right: -6px;
	background: repeating-linear-gradient(#282f3c 0 2px, transparent 2px 4px), linear-gradient(90deg, #b0b2b4 2px, transparent 2px 4px, #b0b2b4 4px);
}
.entry {
	display: flex;
	flex: 1;
	align-items: center;
	height: 32px;
	margin-top: 1px;
	padding: 0 7px 0 5px;
	border-radius: 3px;
	background: #bbbdbf;
}
.entry svg { height: 16px; }
.entry .caret {
	margin: 0 8px 0 3px;
	border-width: 5px 5px 0;
	border-top-color: #555;
}
.entry input {
	flex: 1;
	font-style: italic;
}
.entry input::placeholder { color: #66686a; }
.entry button {
	border: solid transparent;
	border-width: 0 5px 5px;
	border-bottom-color: #555;
}

/* status bar */
.status {
	display: flex;
	flex: none;
	gap: 3px;
	height: 43px;
	padding: 7px 5px 6px;
}
.fill {
	flex: 1;
	margin-right: 2px;
}
.fill, .set, .model-btn {
	height: 30px;
	background: #3b4453;
}
.model-btn { padding: 0 5px; }
.set {
	display: flex;
	align-items: center;
}
.set button {
	justify-content: center;
	width: 30px;
	height: 28px;
}
.set .drop { width: 20px; }
.set .drop::after, .scale .caret {
	border-width: 5px 5px 0;
}
.set .on {
	width: 28px;
	margin: 0 1px;
	background: #5f8cc0;
}
.set .scale {
	gap: 5px;
	width: 42px;
}
.wide { padding: 0 2px; }
.wide svg {
	width: 26px;
	height: 26px;
}
```
